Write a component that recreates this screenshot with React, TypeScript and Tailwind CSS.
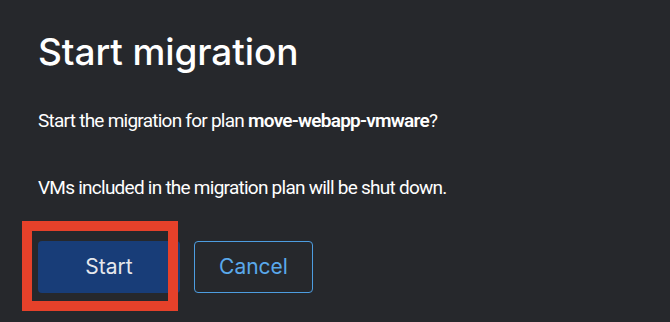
export default function App() {
  return (
    <div
      className="h-[322px] w-[670px] overflow-hidden bg-[#26282c] pl-[38px] text-white"
      style={{ fontFamily: "Inter, 'Noto Sans', sans-serif" }}
    >
      <h1 className="pt-[28px] text-[37px] font-medium leading-[48px] tracking-[-0.1px]">
        Start migration
      </h1>
      <div className="text-[19px] leading-[28px] tracking-[-0.75px]" style={{ fontFamily: "Roboto, sans-serif" }}>
        <p className="mt-[31px]">
          Start the migration for plan <span className="font-semibold">move-webapp-vmware</span>?
        </p>
        <p className="mt-[39px]">VMs included in the migration plan will be shut down.</p>
      </div>
      <div className="mt-[39px] flex gap-[14px]">
        <div className="relative">
          <button
            type="button"
            className="h-[52px] w-[142px] rounded-[4px] bg-[#183d78] text-[21px] text-[#e6e8ec]"
          >
            Start
          </button>
          <div className="pointer-events-none absolute -left-[16px] -top-[20px] h-[90px] w-[156px] border-[10px] border-[#e6412a]" />
        </div>
        <button
          type="button"
          className="h-[52px] w-[119px] rounded-[4px] border border-[#4d9de0] text-[21px] text-[#5aa9eb]"
        >
          Cancel
        </button>
      </div>
    </div>
  );
}
